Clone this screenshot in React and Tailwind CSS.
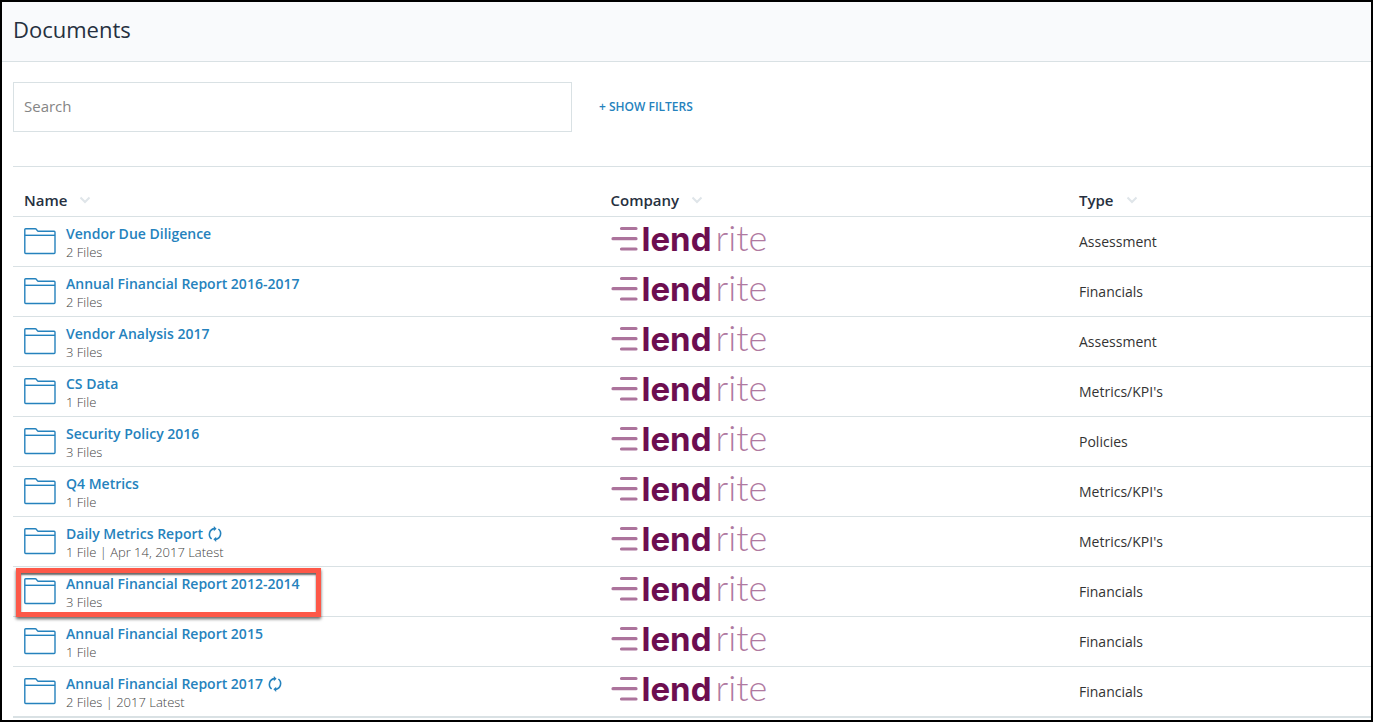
import React from 'react';

// Elenco delle cartelle mostrate nella tabella.
const documents = [
    { name: 'Vendor Due Diligence', info: '2 Files', type: 'Assessment' },
    { name: 'Annual Financial Report 2016-2017', info: '2 Files', type: 'Financials' },
    { name: 'Vendor Analysis 2017', info: '3 Files', type: 'Assessment' },
    { name: 'CS Data', info: '1 File', type: "Metrics/KPI's" },
    { name: 'Security Policy 2016', info: '3 Files', type: 'Policies' },
    { name: 'Q4 Metrics', info: '1 File', type: "Metrics/KPI's" },
    { name: 'Daily Metrics Report', info: '1 File | Apr 14, 2017 Latest', type: "Metrics/KPI's", recurring: true },
    { name: 'Annual Financial Report 2012-2014', info: '3 Files', type: 'Financials', highlighted: true },
    { name: 'Annual Financial Report 2015', info: '1 File', type: 'Financials' },
    { name: 'Annual Financial Report 2017', info: '2 Files | 2017 Latest', type: 'Financials', recurring: true },
];

const FolderIcon = () => (
    <svg className="h-7 w-8 shrink-0 text-[#2582bd]" viewBox="0 1 32 28" fill="none" stroke="currentColor" strokeWidth="1.4" strokeLinejoin="round" aria-hidden="true">
        <path d="M1.7 1.7H11.2q.8 0 1.2.6l.9 1.4q.4.6 1.1.6H30.1q.9 0 .9.9V25.6q0 .9-.9.9H1.7q-.9 0-.9-.9V2.6q0-.9.9-.9Z" />
        <path d="M.8 8.3H31" />
    </svg>
);

// Due archi con frecce: indica un documento ricorrente.
const RecurringIcon = () => (
    <svg className="h-4 w-4 text-[#2582bd]" viewBox="0 0 16 16" fill="none" stroke="currentColor" strokeWidth="1.6" aria-hidden="true">
        <path d="M4.6 13A5.9 5.9 0 0 1 7.2 2.6" />
        <path d="M11.4 3A5.9 5.9 0 0 1 8.8 13.4" />
        <path d="M6.8 0 9.6 2.7 6.8 5.2Z" fill="currentColor" stroke="none" />
        <path d="M9.2 16 6.4 13.3 9.2 10.8Z" fill="currentColor" stroke="none" />
    </svg>
);

const SortIcon = () => (
    <svg className="h-2 w-3" viewBox="0 0 12 8" fill="none" stroke="#dfe5e9" strokeWidth="2" aria-hidden="true">
        <path d="M1.5 1.5 6 6l4.5-4.5" />
    </svg>
);

const LendriteLogo = () => (
    <div className="flex h-10 items-center gap-[3px] pb-2 text-[#6d0e50]">
        <svg className="h-7 w-7 shrink-0" viewBox="0 0 28 28" stroke="#ac739c" strokeWidth="3.2" strokeLinecap="round" aria-hidden="true">
            <path d="M10.5 4.5H25M2 14.7H25M10.5 25H25" />
        </svg>
        <div className="flex items-baseline gap-1 leading-8">
            <span className="font-['Inter',sans-serif] text-[33px] font-bold">lend</span>
            <span className="font-['Lato',sans-serif] text-[36px] font-light text-[#b07aa1]">rite</span>
        </div>
    </div>
);

const SortableHeader = ({ label, className }) => (
    <th scope="col" className={`h-[51px] border-y border-[#d9e1e4] pt-[17px] text-left ${className}`}>
        <button type="button" className="flex items-center gap-3 text-[15px] leading-5 font-semibold text-[#263040]">
            {label}
            <SortIcon />
        </button>
    </th>
);

const DocumentRow = ({ name, info, type, recurring, highlighted }) => (
    <tr className="group">
        <td className="relative h-[50px] border-b border-[#d9e1e4] pl-[11px] group-last:h-[51px] group-last:border-b-2">
            <div className="flex items-center gap-[10px]">
                <FolderIcon />
                <div>
                    <div className="flex items-center gap-1">
                        <a href="#" className="text-sm leading-5 font-semibold text-[#2582bd]">{name}</a>
                        {recurring && <RecurringIcon />}
                    </div>
                    <p className="text-[13px] leading-4 font-light text-[#444]">{info}</p>
                </div>
            </div>
            {/* Riquadro rosso sopra la riga evidenziata */}
            {highlighted && (
                <div className="pointer-events-none absolute top-px left-[3px] h-[49px] w-[305px] border-5 border-[#fd5848] shadow-[0_2px_3px_rgba(0,0,0,0.6),inset_0_2px_2px_rgba(0,0,0,0.6)]" />
            )}
        </td>
        <td className="border-b border-[#d9e1e4] group-last:border-b-2">
            <LendriteLogo />
        </td>
        <td className="border-b border-[#d9e1e4] text-sm text-[#333] group-last:border-b-2">{type}</td>
    </tr>
);

const App = () => {
    return (
        <div className="min-h-screen w-full border-2 border-black bg-white font-['Open_Sans',sans-serif]">
            {/* Intestazione della pagina */}
            <header className="border-b border-[#d9e1e4] bg-[#f9fafc] px-[11px] pt-[11px] pb-4">
                <h1 className="text-[22px] leading-8 text-[#263040]">Documents</h1>
            </header>

            <main className="pl-[11px]">
                {/* Barra di ricerca e filtri */}
                <div className="flex items-center gap-[27px] pt-5 pb-[34px]">
                    <input
                        type="text"
                        aria-label="Search"
                        placeholder="Search"
                        className="h-[50px] w-full max-w-[559px] border border-[#d9e1e4] px-[10px] pb-0.5 text-[15px] placeholder:text-[#858585]"
                    />
                    <button type="button" className="text-xs font-semibold text-[#2582bd]">+ SHOW FILTERS</button>
                </div>

                <table className="w-full table-fixed border-separate border-spacing-0">
                    <thead>
                        <tr>
                            <SortableHeader label="Name" className="w-[44%] pl-[11px]" />
                            <SortableHeader label="Company" className="w-[34.5%]" />
                            <SortableHeader label="Type" className="w-[21.5%]" />
                        </tr>
                    </thead>
                    <tbody>
                        {documents.map((doc) => (
                            <DocumentRow key={doc.name} {...doc} />
                        ))}
                    </tbody>
                </table>
            </main>
        </div>
    );
};

export default App;
